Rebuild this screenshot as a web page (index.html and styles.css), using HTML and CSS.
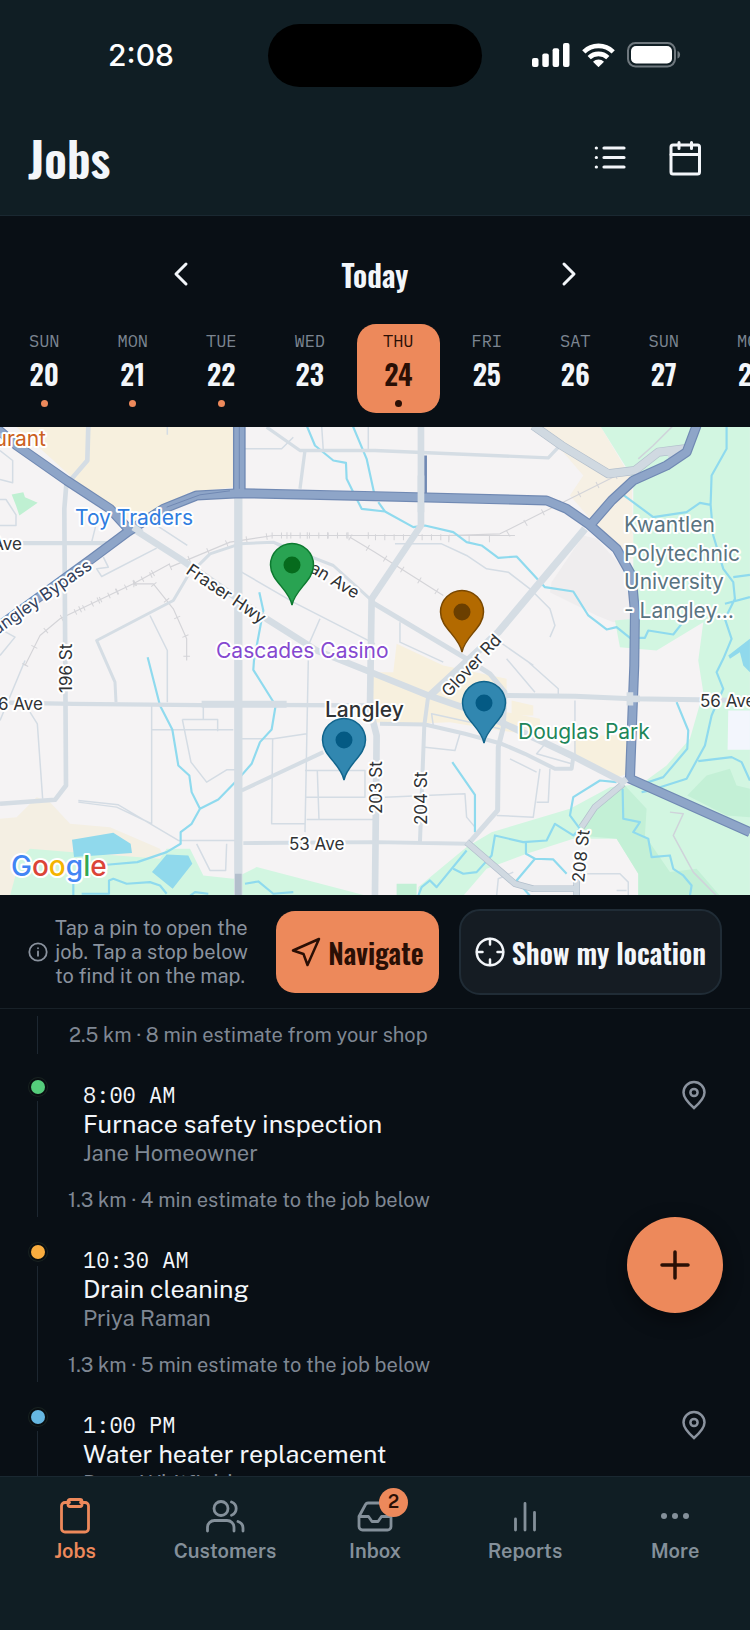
FILE: index.html
```html
<!DOCTYPE html>
<html lang="en">
<head>
<meta charset="utf-8">
<meta name="viewport" content="width=device-width, initial-scale=1">
<title>Jobs</title>
<link rel="stylesheet" href="styles.css">
</head>
<body>
<div class="app">
  <header class="top">
    <div class="status">
      <span class="status-time">2:08</span>
      <span class="island"></span>
      <span class="status-icons">
        <svg width="38" height="24" viewBox="0 0 38 24" fill="#fff" aria-hidden="true"><rect y="15" width="6.500" height="9" rx="2"/><rect x="10.300" y="10.500" width="6.500" height="13.500" rx="2"/><rect x="20.600" y="5.300" width="6.500" height="18.700" rx="2"/><rect x="31" y="0" width="6.500" height="24" rx="2"/></svg>
        <svg width="33" height="24" viewBox="0 0 33 24" aria-hidden="true"><g fill="none" stroke="#fff" stroke-width="4.600"><path d="M1.800 8.900A21 21 0 0 1 31.200 8.900"/><path d="M7.200 14.600A13.400 13.400 0 0 1 25.800 14.600"/></g><path d="M11 18.700A8 8 0 0 1 22 18.700L16.500 24.200Z" fill="#fff"/></svg>
        <svg width="54" height="26" viewBox="0 0 54 26" aria-hidden="true"><rect x="1" y="1" width="47" height="23.500" rx="7.500" fill="none" stroke="#6f787e" stroke-width="2"/><rect x="4" y="4" width="41" height="17.500" rx="5" fill="#fff"/><path d="M50.500 9c3.500 1 3.500 6.500 0 7.500z" fill="#6f787e"/></svg>
      </span>
    </div>
    <div class="titlebar">
      <h1>Jobs</h1>
      <div class="actions">
        <button type="button" aria-label="List view"><svg width="38" height="38" viewBox="0 0 38 38" fill="none" stroke="currentColor" stroke-width="3.200" stroke-linecap="round" aria-hidden="true"><path d="M13 9h20M13 18.500h20M13 28h20M5.300 9h.1M5.300 18.500h.1M5.300 28h.1"/></svg></button>
        <button type="button" aria-label="Calendar"><svg width="38" height="38" viewBox="0 0 38 38" fill="none" stroke="currentColor" stroke-width="3" stroke-linecap="round" stroke-linejoin="round" aria-hidden="true"><rect x="5" y="6" width="28.500" height="29" rx="2"/><path d="M5 15.500h28.500M13 3.500v6M25.500 3.500v6"/></svg></button>
      </div>
    </div>
  </header>

  <section class="dates">
    <div class="datenav">
      <button type="button" aria-label="Previous day"><svg width="28" height="28" viewBox="0 0 28 28" aria-hidden="true"><path d="M19 4L9 14l10 10"/></svg></button>
      <h2>Today</h2>
      <button type="button" aria-label="Next day"><svg width="28" height="28" viewBox="0 0 28 28" aria-hidden="true"><path d="M9 4l10 10L9 24"/></svg></button>
    </div>
    <div class="week">
      <button type="button" class="day has-jobs"><span>SUN</span><b>20</b></button>
      <button type="button" class="day has-jobs"><span>MON</span><b>21</b></button>
      <button type="button" class="day has-jobs"><span>TUE</span><b>22</b></button>
      <button type="button" class="day"><span>WED</span><b>23</b></button>
      <button type="button" class="day has-jobs selected"><span>THU</span><b>24</b></button>
      <button type="button" class="day"><span>FRI</span><b>25</b></button>
      <button type="button" class="day"><span>SAT</span><b>26</b></button>
      <button type="button" class="day"><span>SUN</span><b>27</b></button>
      <button type="button" class="day"><span>MON</span><b>28</b></button>
    </div>
  </section>

  <svg class="map" viewBox="0 0 750 468" preserveAspectRatio="xMidYMid slice" role="img" aria-label="Map of Langley with job pins">
    <rect width="750" height="469" fill="#f5f3f4"/>
    <g transform="translate(0 -1.500) scale(.3333)" fill="none" stroke-linejoin="round">
      <g fill="#f7f0de">
        <path d="M45 0H700V185L570 200 480 245 420 290 330 262 210 150Z"/>
        <path d="M1585 0H1800L1895 160 1900 400 1870 400 1815 320 1780 290 1710 210 1750 150 1690 80Z" fill="#f6f0e4"/>
        <path d="M0 1180 50 1175 110 1115 150 1130 210 1195 330 1205 400 1235 480 1270 500 1320 340 1360 60 1411H0Z" fill="#f4efe3"/>
        <path d="M1190 655 1330 720 1520 760 1520 860 1620 880 1620 930 1500 915 1350 890 1240 895 1110 890 1120 740 1180 740Z"/>
        <path d="M1535 825 1600 840 1600 870 1535 870ZM1722 930H1885V1045L1850 1055 1722 990Z"/>
      </g>
      <path d="M1655 470 1750 330 1790 340 1880 440 1895 580 1840 590 1790 570 1650 500Z" fill="#efedee"/>
      <g fill="#d2f6e1">
        <path d="M1800 0H2250V705 1411H1915V1345L1850 1240 1720 1240 1580 1285 1460 1330 1390 1411H1255V1385L1400 1265 1475 1220 1710 1150 1830 1085 1925 1075 2000 1020 2070 940 2110 800 2095 705 2110 590 1970 675 1860 665 1845 585 1900 580V160Z"/>
        <path d="M90 1270 210 1280 480 1300 500 1270H570L610 1350 700 1360 770 1325 1100 1411H30L60 1300Z"/>
      </g>
      <path d="M2185 855H2250V973H2183Z" fill="#f3f6fd"/>
      <g fill="#c3f0d6">
        <path d="M1870 1075 1940 1150 1935 1230 2010 1340 2090 1330 2160 1411H1915V1345L1850 1240 1740 1230 1760 1170ZM2062 1110 2120 1050 2190 1030 2210 1080 2250 1090V1175L2180 1170ZM1190 1375H1250V1411H1190Z"/>
        <path d="M35 207 70 200 75 215 113 232 58 270 48 240Z" fill="#bff0d2"/>
      </g>
      <path d="M216 1243 340 1222 392 1255 396 1283 222 1295ZM500 1287 565 1290 577 1315 518 1390 456 1340ZM2185 690 2250 640V740L2230 720 2220 680 2190 700Z" fill="#90d9ec"/>

      <g stroke="#d4dce4" stroke-width="4.500">
        <path d="M0 75 38 105V172L0 162M0 222H18L48 268V300H0M502 0V28M275 350 290 290M470 300 562 360M470 368 305 453 290 430 325 425 310 395M0 610 45 635 0 690"/>
        <path d="M725 440 880 530 1125 655M960 580 925 660M735 70H845L880 35M450 570 502 675V830M965 0 970 75M1105 0V75M1200 590V650L1330 710"/>
        <path d="M455 840V1195M455 913H700M610 840V882M547 882H653V917M547 882 573 1010 620 1070 680 1033H705M725 940H820L920 925M818 940 815 1195H915M925 705 915 1220M915 1035H1095V1115H915M952 1035 957 1180M920 1182H1125M235 1125 355 1138 535 1245H715M590 1255 630 1335H677L680 1255M235 1130 350 1145 455 1195M90 860 112 895 128 1120M0 885 75 705"/>
        <path d="M1185 355H1325L1400 390 1460 430 1525 440 1590 490 1650 550 1665 600 1650 635M1500 650 1600 720M1520 700 1605 800M1580 705 1675 790V810M1725 825V1000M1300 900 1295 865 1500 910M1275 965 1365 975 1380 925M1155 1115 1395 1105 1400 1175 1425 1205M1490 1170 1600 1175 1620 1030M1530 1000 1610 1040M1610 1130H1645L1650 1030M1640 950 1610 985 1715 1015M1640 960 1720 1000M1490 1411 1495 1360 1540 1340M1740 1345 1860 1345 1885 1370V1411M1850 1395H1880"/>
        <path d="M2010 1160 2050 1165 2020 1230 2080 1340 2150 1411M1915 100 1960 60 2020 0" stroke="#cfd3da"/>
      </g>

      <g stroke="#d4d4d8" stroke-width="3.500">
        <path d="M75 720 120 630 180 580 400 475 510 415M400 475 460 475 520 550 560 640V705M510 425 690 350 820 330H1545M1345 330 1500 325 1620 265 1850 150M1050 335 1125 380 1330 510"/>
        <path d="M75 720 120 630 180 580 400 475 510 415M400 475 460 475 520 550 560 640V705M510 425 690 350 820 330H1125M1345 340H1500L1620 265 1850 150M1050 335 1125 380 1330 510" stroke-width="20" stroke-dasharray="3 58"/>
        <path d="M225 560 460 445M815 330H1060M1125 335H1350" stroke-width="18" stroke-dasharray="3 25"/>
      </g>

      <g stroke="#8fdaee" stroke-width="6.500">
        <path d="M920 0 945 60 1000 105 1038 112 1040 160 1060 200 1085 250 1155 258 1240 305 1275 300 1360 320 1400 350 1445 360 1495 397 1550 393 1635 485 1720 498 1765 570 1820 612 1850 605 1890 637 1935 637 1945 615 2020 627 2045 595M1058 0 1100 100 1122 200M1135 230 1155 258"/>
        <path d="M1870 208 1960 275 2060 260 2100 232 2132 238 2135 150 2180 70V0M2132 238 2140 330 2170 430 2200 470 2205 520 2175 580 2195 640 2170 700 2150 740 2170 790 2135 870 2115 960 2060 1060 1950 1095 1925 1100M2200 455 2250 448M2175 535 2250 515M2095 1007 2195 995 2225 1010 2250 1065M2030 830 2065 915 2062 970 1990 1055 1915 1080"/>
        <path d="M778 500 790 555 762 705 760 733 827 840 815 912 780 950 755 1015 720 1055 655 1122 600 1150 575 1195 542 1220V1255L500 1280 412 1310 320 1318M443 695 480 840 517 912 535 1020 568 1050 575 1100 600 1150M220 1411V1350M245 1405H327V1365L340 1360 380 1375 450 1370 480 1380 500 1405M570 1411 585 1400 625 1405M735 1375 775 1368 820 1405 880 1400"/>
        <path d="M1357 1010 1425 1108V1220M1255 1411 1265 1385 1290 1365 1310 1385 1400 1275M1360 1330 1390 1345 1430 1340 1475 1290 1485 1230 1570 1250 1640 1245 1665 1195 1720 1230 1740 1210 1710 1170 1720 1115 1800 1065 1850 1070M1578 1248V1285L1605 1300 1550 1365 1590 1411M1605 1300 1660 1302 1700 1345M1868 1090 1870 1180 1920 1190 1900 1220 1945 1240 1955 1295 2010 1290 2020 1330 2050 1350 2075 1380 2070 1411"/>
      </g>

      <g stroke="#d5dde4">
        <path d="M715 200V1411" stroke-width="25"/>
        <path d="M265 0 262 105 215 160M200 165 193 250 198 1080 165 1123 0 1135" stroke-width="14"/>
        <path d="M50 353H330M0 831 220 835 600 839 720 838 1125 840" stroke-width="13"/>
        <path d="M605 836H860" stroke-width="21"/>
        <path d="M400 310 540 400 800 580 950 675 1100 735 1285 810 1445 865 1535 905 1725 995 1870 1070" stroke-width="20"/>
        <path d="M820 350 1000 420 1110 520M570 440 520 525 290 645 345 770 348 830M575 440 630 385 720 355 820 350 850 365" stroke-width="9"/>
        <path d="M800 5 900 75H1125L1645 97 1680 60M915 75 900 190" stroke-width="10"/>
        <path d="M1263 0V300L1115 520 1110 850 1130 930 1125 1411" stroke-width="20"/>
        <path d="M1755 310 1495 620 1290 810" stroke-width="22"/>
        <path d="M1115 530 1400 700 1470 745 1515 800 1510 905 1495 965 1493 1155 1405 1255" stroke-width="15"/>
        <path d="M1505 810 1725 812 1895 820 2250 825" stroke-width="15"/>
        <path d="M1140 895 1275 897 1395 925 1505 955 1575 985 1665 1030H1715L1720 995M725 1095 970 980M730 1253 1125 1250 1405 1255M1285 810 1273 900 1260 1250" stroke-width="12"/>
      </g>
      <g stroke="#b3bfcc" stroke-width="20"><path d="M1870 1075 1785 1145 1745 1205M1400 1250 1545 1375 1600 1390H1730M1730 1360V1411M715 1345V1411"/><path d="M1600 0 1685 60 1825 145 1905 135 1975 80 2055 70" stroke-width="27"/></g>
      <g stroke="#d0d9e1" stroke-width="16"><path d="M1870 1075 1785 1145 1745 1205M1400 1250 1545 1375 1600 1390H1730M1730 1360V1411"/><path d="M1600 0 1685 60 1825 145 1905 135 1975 80 2055 70M2015 80 2018 105" stroke-width="23"/></g>

      <g stroke="#7089b3" stroke-width="30"><path d="M-20 0 50 60 200 165 330 250 385 310M0 600 275 400 385 318 490 250 590 210 720 203 1125 212 1640 225 1700 250 1765 295 1850 370 1895 450 1905 560 1903 720 1890 1060 2250 1220M2090 0 2060 80 2000 120 1900 165 1835 225 1770 300"/><path d="M718 0V200" stroke-width="38"/><path d="M1277 90V205" stroke-width="8"/></g>
      <g stroke="#8ea5c8" stroke-width="23"><path d="M-20 0 50 60 200 165 330 250 385 310M0 600 275 400 385 318 490 250 590 210 720 203 1125 212 1640 225 1700 250 1765 295 1850 370 1895 450 1905 560 1903 720 1890 1060 2250 1220M2090 0 2060 80 2000 120 1900 165 1835 225 1770 300"/><path d="M718 0V200" stroke-width="30"/></g>
      <path d="M718 0V190M500 245 600 208 690 196" stroke="#7089b3" stroke-width="3"/>
      <path d="M1263 150V260M400 305 425 322M1885 820H1920M1890 800V840M1860 1075 1880 1060" stroke="#d5dde4" stroke-width="20"/>
    </g>

    <g class="labels">
      <text class="place food" x="46" y="19" text-anchor="end">Restaurant</text>
      <text class="place shop" x="75" y="98">Toy Traders</text>
      <text class="place casino" x="216" y="231">Cascades Casino</text>
      <text class="place park" x="518" y="312">Douglas Park</text>
      <text class="place town" x="325" y="290">Langley</text>
      <g class="place school"><text x="624" y="105">Kwantlen</text><text x="624" y="134">Polytechnic</text><text x="624" y="162">University</text><text x="624" y="191">- Langley…</text></g>
      <text x="22" y="123" text-anchor="end">56 Ave</text>
      <text x="43" y="283" text-anchor="end">56 Ave</text>
      <text x="700" y="280">56 Ave</text>
      <text x="289" y="423">53 Ave</text>
      <text class="bypass" transform="translate(93 141) rotate(-35)" text-anchor="end">Langley Bypass</text>
      <text transform="translate(72 266) rotate(-90)">196 St</text>
      <text transform="translate(185 146) rotate(34)">Fraser Hwy</text>
      <text transform="translate(355 172) rotate(31)" text-anchor="end">Logan Ave</text>
      <text transform="translate(449 271) rotate(-47)">Glover Rd</text>
      <text transform="translate(382 387) rotate(-90)">203 St</text>
      <text transform="translate(427 398) rotate(-90)">204 St</text>
      <text transform="translate(584 456) rotate(-84)">208 St</text>
      <text class="google" x="11" y="449"><tspan fill="#4285f4">G</tspan><tspan fill="#db4437">o</tspan><tspan fill="#f4b400">o</tspan><tspan fill="#4285f4">g</tspan><tspan fill="#34a853">l</tspan><tspan fill="#db4437">e</tspan></text>
    </g>

    <g stroke-width="1.500">
      <g transform="translate(292 178)"><path d="M0 0C-3 -16 -21.500 -24 -21.500 -40A21.500 21.500 0 1 1 21.500 -40C21.500 -24 3 -16 0 0Z" fill="#29a352" stroke="#0d7a30"/><circle cy="-40" r="8.500" fill="#066b1d"/></g>
      <g transform="translate(462 225)"><path d="M0 0C-3 -16 -21.500 -24 -21.500 -40A21.500 21.500 0 1 1 21.500 -40C21.500 -24 3 -16 0 0Z" fill="#b36a00" stroke="#7a4800"/><circle cy="-40" r="8.500" fill="#6b3f00"/></g>
      <g transform="translate(344 353)"><path d="M0 0C-3 -16 -21.500 -24 -21.500 -40A21.500 21.500 0 1 1 21.500 -40C21.500 -24 3 -16 0 0Z" fill="#3187b0" stroke="#10648c"/><circle cy="-40" r="8.500" fill="#045a84"/></g>
      <g transform="translate(484 316)"><path d="M0 0C-3 -16 -21.500 -24 -21.500 -40A21.500 21.500 0 1 1 21.500 -40C21.500 -24 3 -16 0 0Z" fill="#3187b0" stroke="#10648c"/><circle cy="-40" r="8.500" fill="#045a84"/></g>
    </g>
  </svg>

  <section class="controls">
    <div class="hint">
      <svg width="20" height="20" viewBox="0 0 20 20" fill="none" stroke="currentColor" stroke-width="1.800" stroke-linecap="round" aria-hidden="true"><circle cx="10" cy="10" r="8.700"/><path d="M10 9.500v4.300M10 6.200v.1"/></svg>
      <p>Tap a pin to open the job. Tap a stop below to find it on the map.</p>
    </div>
    <button type="button" class="btn primary"><svg width="30" height="30" viewBox="0 0 30 30" aria-hidden="true"><path d="M28 2 2 13.500 12.500 17 16.500 28Z"/></svg><span>Navigate</span></button>
    <button type="button" class="btn secondary"><svg width="30" height="30" viewBox="0 0 30 30" aria-hidden="true"><circle cx="15" cy="15" r="13.300"/><path d="M15 2v5.500M15 22.500V28M2 15h5.500M22.500 15H28"/></svg><span>Show my location</span></button>
  </section>

  <main class="route">
    <div class="leg first">2.5 km · 8 min estimate from your shop</div>
    <article class="stop green">
      <span class="dot"></span>
      <div class="info"><time>8:00 AM</time><h3>Furnace safety inspection</h3><p>Jane Homeowner</p></div>
      <button type="button" class="locate" aria-label="Show on map"><svg width="26" height="30" viewBox="0 0 26 30" aria-hidden="true"><path d="M13 28C8.500 24 2.500 18.500 2.500 12.500a10.500 10.500 0 0 1 21 0C23.500 18.500 17.500 24 13 28Z"/><circle cx="13" cy="12.500" r="3.600"/></svg></button>
      <div class="leg">1.3 km · 4 min estimate to the job below</div>
    </article>
    <article class="stop amber">
      <span class="dot"></span>
      <div class="info"><time>10:30 AM</time><h3>Drain cleaning</h3><p>Priya Raman</p></div>
      <div class="leg">1.3 km · 5 min estimate to the job below</div>
    </article>
    <article class="stop blue">
      <span class="dot"></span>
      <div class="info"><time>1:00 PM</time><h3>Water heater replacement</h3><p>Dana Whitfield</p></div>
      <button type="button" class="locate" aria-label="Show on map"><svg width="26" height="30" viewBox="0 0 26 30" aria-hidden="true"><path d="M13 28C8.500 24 2.500 18.500 2.500 12.500a10.500 10.500 0 0 1 21 0C23.500 18.500 17.500 24 13 28Z"/><circle cx="13" cy="12.500" r="3.600"/></svg></button>
    </article>
  </main>

  <nav class="tabs">
    <button type="button" class="fab" aria-label="Add job"><svg width="34" height="34" viewBox="0 0 34 34" aria-hidden="true"><path d="M17 4v26M4 17h26"/></svg></button>
    <a href="#jobs" class="active"><svg width="40" height="40" viewBox="0 0 40 40" aria-hidden="true"><path d="M14.500 6.500H10a3.500 3.500 0 0 0-3.500 3.500v22.500A3.500 3.500 0 0 0 10 36h20a3.500 3.500 0 0 0 3.500-3.500V10A3.500 3.500 0 0 0 30 6.500h-4.500"/><rect x="13" y="3.500" width="14" height="7" rx="2"/></svg><span>Jobs</span></a>
    <a href="#customers"><svg width="40" height="40" viewBox="0 0 40 40" aria-hidden="true"><circle cx="16" cy="12.500" r="7"/><path d="M2.500 35v-3.500a7 7 0 0 1 7-7h12.500a7 7 0 0 1 7 7V35M26.500 6a7 7 0 0 1 0 13.200M33 25.500a7 7 0 0 1 5 6.500v3"/></svg><span>Customers</span></a>
    <a href="#inbox"><span class="badge">2</span><svg width="40" height="40" viewBox="0 0 40 40" aria-hidden="true"><path d="M4 20.500h9.500l3.500 5h6l3.500-5H36M10.500 8.500 4 20.500V30.500A3.500 3.500 0 0 0 7.500 34h25a3.500 3.500 0 0 0 3.500-3.500v-10L29.500 8.500A3 3 0 0 0 27 7H13A3 3 0 0 0 10.500 8.500Z"/></svg><span>Inbox</span></a>
    <a href="#reports"><svg width="40" height="40" viewBox="0 0 40 40" aria-hidden="true"><path d="M10.500 34V23M20 34V7.500M29.500 34V16.500"/></svg><span>Reports</span></a>
    <a href="#more"><svg class="filled" width="40" height="40" viewBox="0 0 40 40" aria-hidden="true"><circle cx="9" cy="20" r="3"/><circle cx="20" cy="20" r="3"/><circle cx="31" cy="20" r="3"/></svg><span>More</span></a>
  </nav>
</div>
</body>
</html>
```
FILE: styles.css
```css
* { box-sizing: border-box; }

body, h1, h2, h3, p { margin: 0; }

body {
  background: #090f15;
  color: #f3f6fa;
  font-family: "Public Sans", Inter, sans-serif;
}

button {
  padding: 0;
  border: 0;
  background: none;
  color: inherit;
  font: inherit;
}

svg { display: block; flex: none; }

h1, h2, .day b, .btn {
  font-family: Oswald, "Liberation Sans Narrow", "Roboto Condensed", "Liberation Sans", sans-serif;
  font-weight: 600;
}

.app {
  height: 100vh;
  display: flex;
  flex-direction: column;
  overflow: hidden;
}

/* Status bar and title */
.top {
  flex: none;
  background: #101e24;
  border-bottom: 1px solid #1a2831;
}

.status {
  height: 110px;
  display: grid;
  grid-template-columns: 1fr 214px 1fr;
  align-items: center;
}

.status-time {
  justify-self: center;
  padding-left: 14px;
  color: #fff;
  font-family: Inter, sans-serif;
  font-size: 30px;
  font-weight: 500;
}

.island {
  height: 63px;
  border-radius: 32px;
  background: #000;
}

.status-icons {
  display: flex;
  align-items: center;
  gap: 12px;
  padding-left: 50px;
}

.titlebar {
  height: 105px;
  display: flex;
  align-items: center;
  justify-content: space-between;
  padding: 0 46px 10px 28px;
}

h1 {
  font-size: 48px;
  line-height: 60px;
}

.actions {
  display: flex;
  gap: 37px;
}

/* Date picker */
.dates {
  flex: none;
  height: 211px;
  padding-top: 26px;
}

.datenav {
  display: flex;
  align-items: center;
  justify-content: space-between;
  height: 64px;
  padding: 0 167px;
}

.datenav svg {
  fill: none;
  stroke: currentColor;
  stroke-width: 3;
  stroke-linecap: round;
  stroke-linejoin: round;
}

h2 { font-size: 30px; }

.week {
  display: flex;
  margin-top: 18px;
  overflow: hidden;
}

.day {
  position: relative;
  flex: 0 0 calc(11.8% - 6px);
  height: 89px;
  margin: 0 3px;
  padding-top: 5px;
  display: flex;
  flex-direction: column;
  align-items: center;
  border-radius: 19px;
}

.day span {
  color: #7c8591;
  font-family: "IBM Plex Mono", "Liberation Mono", monospace;
  font-size: 17px;
  line-height: 24px;
}

.day b {
  font-size: 28px;
  line-height: 42px;
}

.has-jobs::after {
  content: "";
  width: 7px;
  height: 7px;
  margin-top: 5px;
  border-radius: 50%;
  background: #ed895b;
}

.selected { background: #ed895b; }
.selected, .selected span { color: #2a0f05; }
.selected::after { background: #2a0f05; }

/* Map */
.map {
  width: 100%;
  height: 468px;
}

.labels {
  fill: #2f3234;
  stroke: #fff;
  stroke-width: 4px;
  stroke-linejoin: round;
  paint-order: stroke;
  font-family: Inter, sans-serif;
  font-size: 17px;
}

.place { font-size: 21px; }
.food { fill: #cc601c; }
.shop { fill: #2f7de0; }
.casino { fill: #8549d0; }
.park { fill: #1d8659; }
.school { fill: #5a7481; }
.town { font-weight: 500; }
.bypass { fill: #33415c; }
.google { font-size: 28px; font-weight: 500; }

/* Map controls */
.controls {
  flex: none;
  display: flex;
  align-items: center;
  padding: 14px 28px 13px;
  border-bottom: 1px solid #182128;
}

.hint {
  flex: 1;
  display: flex;
  align-items: center;
  gap: 7px;
  padding-right: 18px;
  color: #8a929e;
}

.hint p {
  font-size: 20px;
  line-height: 24px;
}

.btn {
  flex: none;
  display: flex;
  align-items: center;
  gap: 7px;
  font-size: 28px;
  white-space: nowrap;
}

.btn svg {
  fill: none;
  stroke: currentColor;
  stroke-width: 2.500;
  stroke-linecap: round;
  stroke-linejoin: round;
}

.primary {
  height: 82px;
  padding: 0 15px;
  margin-right: 20px;
  border-radius: 19px;
  background: #ed895b;
  color: #2a0f05;
}

.secondary {
  height: 86px;
  padding: 0 14px;
  border: 2px solid #202c36;
  border-radius: 21px;
  background: #151c23;
}

/* Route list */
.route {
  flex: 1;
  min-height: 0;
  overflow: hidden;
  padding: 7px 28px 0;
}

.leg {
  color: #7f8793;
  font-size: 20px;
  line-height: 34px;
}

.first {
  height: 38px;
  margin: 0 0 23px 9px;
  padding: 2px 0 0 31px;
  border-left: 1px solid #1d2731;
}

.stop {
  position: relative;
  display: grid;
  grid-template-columns: 20px 1fr 56px;
  column-gap: 35px;
  align-content: start;
  height: 165px;
}

.stop::before {
  content: "";
  position: absolute;
  left: 9px;
  top: 24px;
  height: 116px;
  border-left: 1px solid #1d2731;
}

.dot {
  width: 14px;
  height: 14px;
  margin: 3px;
  border-radius: 50%;
  background: currentColor;
  box-shadow: 0 0 0 2px #090e11, 0 0 0 3px #182221;
}

.green .dot { color: #55cd7c; }
.amber .dot { color: #faad3f; }
.blue .dot { color: #66b7e2; }

.info { padding: 3px 0 16px; }

.info time {
  display: block;
  font-family: "IBM Plex Mono", "Liberation Mono", monospace;
  font-size: 22px;
  line-height: 30px;
}

.info h3 {
  font-size: 25px;
  font-weight: 400;
  line-height: 29px;
  white-space: nowrap;
}

.info p {
  color: #7f8793;
  font-size: 22px;
  line-height: 28px;
}

.stop .leg {
  grid-row: 2;
  grid-column: 1 / -1;
  padding-left: 40px;
}

.locate {
  align-self: start;
  justify-self: center;
  margin-top: 3px;
  color: #8a929e;
}

.locate svg {
  fill: none;
  stroke: currentColor;
  stroke-width: 2.500;
}

/* Bottom tabs */
.tabs {
  position: relative;
  flex: none;
  display: grid;
  grid-template-columns: repeat(5, 1fr);
  height: 154px;
  padding-top: 19px;
  background: #101e24;
  border-top: 1px solid #1a2831;
}

.tabs a {
  position: relative;
  display: flex;
  flex-direction: column;
  align-items: center;
  gap: 1px;
  color: #84909a;
  font-size: 20px;
  font-weight: 600;
  line-height: 28px;
  text-decoration: none;
}

.tabs a svg {
  fill: none;
  stroke: currentColor;
  stroke-width: 2.800;
  stroke-linecap: round;
  stroke-linejoin: round;
}

.tabs a .filled { fill: currentColor; stroke: none; }
.tabs .active { color: #ed895b; }

.badge {
  position: absolute;
  top: -8px;
  left: calc(50% + 4px);
  width: 29px;
  height: 29px;
  border-radius: 50%;
  background: #ed895b;
  color: #2a0f05;
  font-size: 18px;
  text-align: center;
}

.fab {
  position: absolute;
  right: 27px;
  bottom: calc(100% + 164px);
  width: 96px;
  height: 96px;
  display: grid;
  place-items: center;
  border-radius: 50%;
  background: #ed895b;
  box-shadow: 0 6px 20px rgba(0, 0, 0, .45);
  color: #2a0f05;
}

.fab svg {
  fill: none;
  stroke: currentColor;
  stroke-width: 3.500;
  stroke-linecap: round;
}
```
